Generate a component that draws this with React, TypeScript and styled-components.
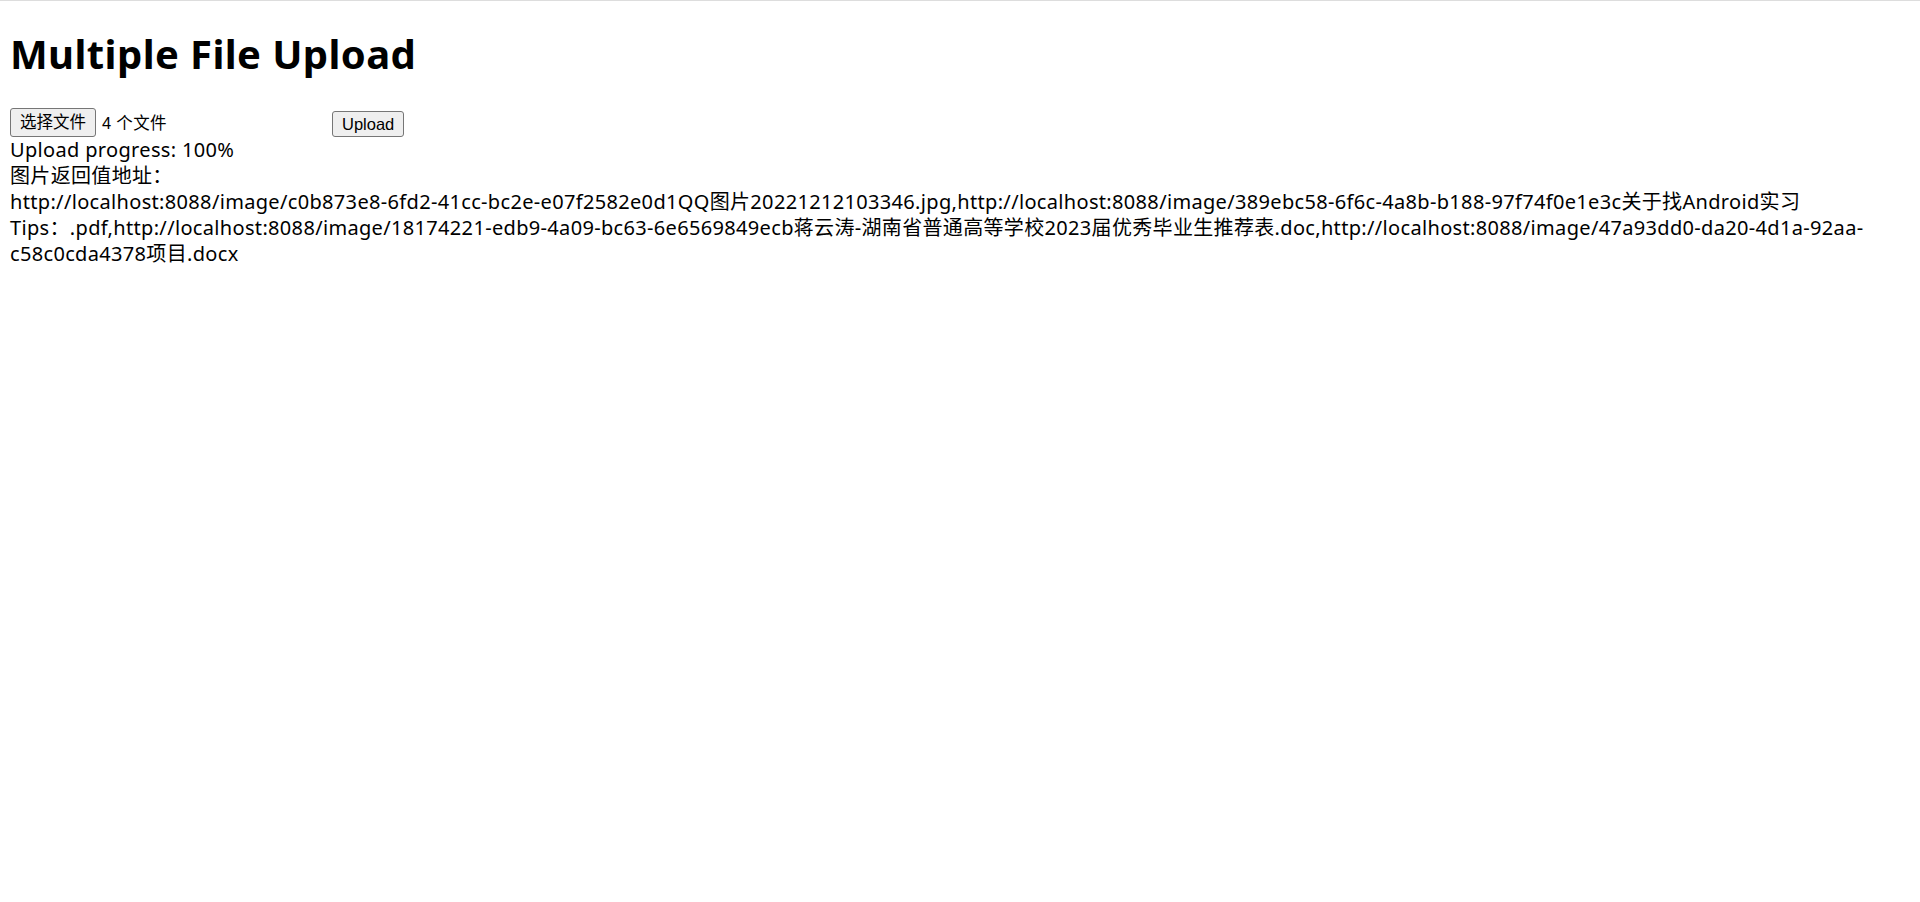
import React from "react";
import styled, { createGlobalStyle } from "styled-components";

const Global = createGlobalStyle`
  html, body { margin: 0; padding: 0; background: #ffffff; }
  body {
    font-family: "Noto Sans", "Noto Sans CJK SC", sans-serif;
    color: #000000;
  }
`;

const Page = styled.div`
  border-top: 1px solid #dddddd;
  padding: 0 10px;
  font-size: 20px;
  line-height: 26px;
  letter-spacing: 0.33px;
`;

const Title = styled.h1`
  margin: 26px 0 27px 0;
  font-size: 40px;
  line-height: 54px;
  font-weight: 700;
  letter-spacing: 0.4px;
`;

const UploadRow = styled.div`
  display: flex;
  align-items: flex-end;
  height: 29px;
  letter-spacing: 0;
`;

const FilePicker = styled.div`
  display: flex;
  align-items: center;
  gap: 6px;
  width: 318px;
  margin-right: 4px;
`;

const NativeButton = styled.button<{ $tall?: boolean }>`
  font-family: "Liberation Sans", "Noto Sans CJK SC", Arial, sans-serif;
  font-size: 16.5px;
  line-height: ${(p) => (p.$tall ? "25px" : "22px")};
  padding: 1px 9px;
  margin: 0;
  border: 1px solid #767676;
  border-radius: 3px;
  background: #efefef;
  color: #000000;
  cursor: default;
`;

const FileCount = styled.span`
  font-family: "Liberation Sans", "Noto Sans CJK SC", Arial, sans-serif;
  font-size: 16.5px;
  letter-spacing: 0.3px;
  white-space: nowrap;
`;

const TextLine = styled.div`
  word-break: normal;
`;

const urls =
  "http://localhost:8088/image/c0b873e8-6fd2-41cc-bc2e-e07f2582e0d1QQ图片20221212103346.jpg,http://localhost:8088/image/389ebc58-6f6c-4a8b-b188-97f74f0e1e3c关于找Android实习Tips：.pdf,http://localhost:8088/image/18174221-edb9-4a09-bc63-6e6569849ecb蒋云涛-湖南省普通高等学校2023届优秀毕业生推荐表.doc,http://localhost:8088/image/47a93dd0-da20-4d1a-92aa-c58c0cda4378项目.docx";

export default function App() {
  return (
    <>
      <Global />
      <Page>
        <Title>Multiple File Upload</Title>
        <UploadRow>
          <FilePicker>
            <NativeButton $tall type="button">选择文件</NativeButton>
            <FileCount>4 个文件</FileCount>
          </FilePicker>
          <NativeButton type="button">Upload</NativeButton>
        </UploadRow>
        <TextLine>Upload progress: 100%</TextLine>
        <TextLine>图片返回值地址：</TextLine>
        <TextLine>{urls}</TextLine>
      </Page>
    </>
  );
}
